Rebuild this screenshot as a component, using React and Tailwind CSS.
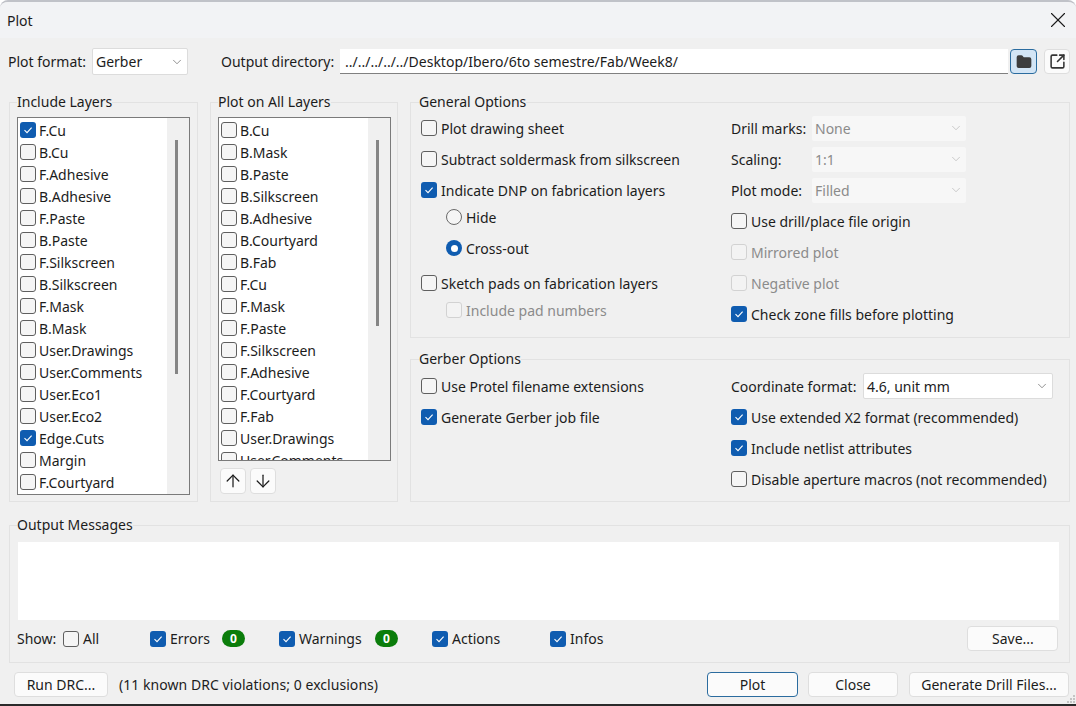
import React from 'react';
import { ArrowDown, ArrowUp, ChevronDown, Folder, SquareArrowOutUpRight, X } from 'lucide-react';

const includeLayers = [
  'F.Cu', 'B.Cu', 'F.Adhesive', 'B.Adhesive', 'F.Paste', 'B.Paste', 'F.Silkscreen', 'B.Silkscreen', 'F.Mask',
  'B.Mask', 'User.Drawings', 'User.Comments', 'User.Eco1', 'User.Eco2', 'Edge.Cuts', 'Margin', 'F.Courtyard',
];
const allLayers = [
  'B.Cu', 'B.Mask', 'B.Paste', 'B.Silkscreen', 'B.Adhesive', 'B.Courtyard', 'B.Fab', 'F.Cu', 'F.Mask',
  'F.Paste', 'F.Silkscreen', 'F.Adhesive', 'F.Courtyard', 'F.Fab', 'User.Drawings', 'User.Comments',
];

const Box = ({ checked, disabled }) => {
  if (checked) {
    return (
      <span className="flex h-4 w-4 shrink-0 items-center justify-center rounded-[3px] bg-[#0f5cb0]">
        <svg width="10" height="10" viewBox="0 0 10 10" fill="none" stroke="white" strokeWidth="1.1">
          <path d="M1.5 5.2 L4 7.6 L8.6 2.6" />
        </svg>
      </span>
    );
  }
  return (
    <span className={`h-4 w-4 shrink-0 rounded-[3px] border ${disabled ? 'border-[#d2d2d2] bg-[#f3f3f3]' : 'border-[#5f5f5f] bg-[#f5f5f5]'}`} />
  );
};

const Check = ({ label, checked, disabled, className = '' }) => (
  <div className={`flex h-6 items-center gap-1 ${disabled ? 'text-[#8b8b8b]' : ''} ${className}`}>
    <Box checked={checked} disabled={disabled} />
    <span className="whitespace-nowrap">{label}</span>
  </div>
);

const Radio = ({ label, selected, className = '' }) => (
  <div className={`flex h-6 items-center gap-1 pl-[25px] ${className}`}>
    {selected ? (
      <span className="flex h-4 w-4 shrink-0 items-center justify-center rounded-full bg-[#0f5cb0]">
        <span className="h-[7px] w-[7px] rounded-full bg-white" />
      </span>
    ) : (
      <span className="h-4 w-4 shrink-0 rounded-full border border-[#6a6a6a] bg-[#f5f5f5]" />
    )}
    <span>{label}</span>
  </div>
);

const Group = ({ title, legendClass = '', className = '', children }) => (
  <fieldset className={`border border-[#e2e2e2] ${className}`}>
    <legend className={`h-[19px] leading-[17px] ${legendClass}`}>{title}</legend>
    {children}
  </fieldset>
);

const Select = ({ value, disabled, className = '' }) => (
  <div className={`flex h-[25px] items-center justify-between rounded-[2px] pl-[3px] pr-[3px] ${disabled ? 'bg-[#f7f7f7] text-[#8b8b8b]' : 'border border-[#dcdcdc] bg-white'} ${className}`}>
    <span>{value}</span>
    <ChevronDown size={14} strokeWidth={1} className={disabled ? 'text-[#a8a8a8]' : 'text-[#444]'} />
  </div>
);

const Button = ({ children, primary, className = '' }) => (
  <button className={`flex h-[25px] items-center justify-center rounded-[4px] border bg-[#fbfbfb] ${primary ? 'border-[#2b6c9f]' : 'border-[#dedede]'} ${className}`}>
    {children}
  </button>
);

const LayerList = ({ items, checked = [], thumb, className = '' }) => (
  <div className={`flex w-[173px] overflow-hidden border border-[#7a7a7a] bg-white ${className}`}>
    <div className="flex-1 pl-[2px] pt-px">
      {items.map((name) => (
        <div key={name} className="flex h-[22px] items-center gap-[3px]">
          <Box checked={checked.includes(name)} />
          <span>{name}</span>
        </div>
      ))}
    </div>
    <div className="w-[22px] bg-[#f0f0f0] pl-2 pt-[22px]">
      <div className={`w-[3px] bg-[#858585] ${thumb}`} />
    </div>
  </div>
);

const Badge = () => (
  <span className="flex h-[17px] w-[23px] items-center justify-center rounded-full bg-[#0b7d0b] text-[12px] font-bold leading-none text-white">0</span>
);

export default function App() {
  return (
    <div className="relative flex h-[706px] w-[1076px] flex-col overflow-hidden rounded-t-lg border-y-2 border-t-[#c0c2c8] border-b-[#2a2a2a] bg-[#f0f0f0] font-['Noto_Sans',sans-serif] text-[14px] leading-[19px] text-[#1c1c1c]">
      {/* Title bar */}
      <div className="flex h-[36px] shrink-0 items-center justify-between bg-[#f2f3f5] pl-[7px] pr-[5px]">
        <span>Plot</span>
        <X size={26} strokeWidth={1} />
      </div>

      {/* Format and directory */}
      <div className="mt-[10px] flex h-[27px] shrink-0 items-center pl-2">
        <span className="w-[84px]">Plot format:</span>
        <Select value="Gerber" className="h-[27px] w-[96px]" />
        <span className="ml-[33px] w-[119px]">Output directory:</span>
        <div className="flex h-[25px] w-[668px] items-center border-b border-[#808080] bg-white pl-[5px]">
          ../../../../../Desktop/Ibero/6to semestre/Fab/Week8/
        </div>
        <Button primary className="ml-[2px] w-[27px] !bg-[#d3e5f5]">
          <Folder size={16} fill="#3d3d3d" stroke="#3d3d3d" />
        </Button>
        <Button className="ml-[7px] w-[26px]">
          <SquareArrowOutUpRight size={17} strokeWidth={2.2} className="text-[#333]" />
        </Button>
      </div>

      {/* Options */}
      <div className="mt-[18px] flex shrink-0 gap-3 pl-[9px]">
        <Group title="Include Layers" className="h-[409px] w-[189px] pl-[7px]">
          <LayerList items={includeLayers} checked={['F.Cu', 'Edge.Cuts']} thumb="h-[234px]" className="mt-[5px] h-[378px]" />
        </Group>

        <Group title="Plot on All Layers" className="h-[409px] w-[188px] pl-[7px]">
          <LayerList items={allLayers} thumb="h-[186px]" className="mt-[5px] h-[344px]" />
          <div className="mt-[7px] flex gap-1 pl-[2px]">
            <Button className="!h-[26px] w-[26px]"><ArrowUp size={20} strokeWidth={1.5} /></Button>
            <Button className="!h-[26px] w-[26px]"><ArrowDown size={20} strokeWidth={1.5} /></Button>
          </div>
        </Group>

        <div className="flex w-[660px] flex-col gap-3">
          <Group title="General Options" legendClass="-ml-[2px]" className="h-[245px] pl-[10px]">
            <div className="flex pt-1">
              <div className="w-[310px]">
                <Check label="Plot drawing sheet" />
                <Check label="Subtract soldermask from silkscreen" className="mt-[7px]" />
                <Check label="Indicate DNP on fabrication layers" checked className="mt-[7px]" />
                <Radio label="Hide" className="mt-[3px]" />
                <Radio label="Cross-out" selected className="mt-[7px]" />
                <Check label="Sketch pads on fabrication layers" className="mt-[11px]" />
                <Check label="Include pad numbers" disabled className="mt-[3px] pl-[25px]" />
              </div>
              <div className="flex flex-col gap-[7px]">
                {[['Drill marks:', 'None'], ['Scaling:', '1:1'], ['Plot mode:', 'Filled']].map(([label, value]) => (
                  <div key={label} className="flex h-6 items-center">
                    <span className="w-[81px]">{label}</span>
                    <Select value={value} disabled className="w-[154px]" />
                  </div>
                ))}
                <Check label="Use drill/place file origin" />
                <Check label="Mirrored plot" disabled />
                <Check label="Negative plot" disabled />
                <Check label="Check zone fills before plotting" checked />
              </div>
            </div>
          </Group>

          <Group title="Gerber Options" legendClass="-ml-[2px]" className="h-[152px] pl-[10px]">
            <div className="flex pt-[5px]">
              <div className="flex w-[310px] flex-col gap-[7px]">
                <Check label="Use Protel filename extensions" />
                <Check label="Generate Gerber job file" checked />
              </div>
              <div className="flex flex-col gap-[7px]">
                <div className="flex h-6 items-center">
                  <span className="w-[132px] whitespace-nowrap">Coordinate format:</span>
                  <Select value="4.6, unit mm" className="!h-[26px] w-[190px]" />
                </div>
                <Check label="Use extended X2 format (recommended)" checked />
                <Check label="Include netlist attributes" checked />
                <Check label="Disable aperture macros (not recommended)" />
              </div>
            </div>
          </Group>
        </div>
      </div>

      {/* Messages */}
      <Group title="Output Messages" legendClass="-ml-px" className="ml-[9px] mt-[14px] h-[147px] w-[1061px] shrink-0 pl-2">
        <div className="mt-[7px] h-[78px] w-[1041px] bg-white" />
        <div className="mt-[6px] flex h-[25px] items-center">
          <span className="-ml-px w-[46px]">Show:</span>
          <Check label="All" className="w-[87px]" />
          <Check label="Errors" checked className="w-[72px]" />
          <div className="w-[57px]"><Badge /></div>
          <Check label="Warnings" checked className="w-[96px]" />
          <div className="w-[57px]"><Badge /></div>
          <Check label="Actions" checked className="w-[118px]" />
          <Check label="Infos" checked />
          <Button className="ml-[364px] w-[91px]">Save...</Button>
        </div>
      </Group>

      {/* Footer */}
      <div className="mt-[9px] flex h-[25px] shrink-0 items-center pl-[14px]">
        <Button className="w-[94px]">Run DRC...</Button>
        <span className="ml-[11px] w-[588px] tracking-[0.05px]">(11 known DRC violations; 0 exclusions)</span>
        <Button primary className="w-[91px]">Plot</Button>
        <Button className="ml-[10px] w-[90px]">Close</Button>
        <Button className="ml-[11px] w-[160px]">Generate Drill Files...</Button>
      </div>

      {/* Resize grip */}
      <svg className="absolute bottom-0 right-0" width="10" height="10" viewBox="0 0 10 10" fill="#c4c4c4">
        <rect x="7" y="1" width="2" height="2" />
        <rect x="4" y="4" width="2" height="2" />
        <rect x="7" y="4" width="2" height="2" />
        <rect x="1" y="7" width="2" height="2" />
        <rect x="4" y="7" width="2" height="2" />
        <rect x="7" y="7" width="2" height="2" />
      </svg>
    </div>
  );
}
